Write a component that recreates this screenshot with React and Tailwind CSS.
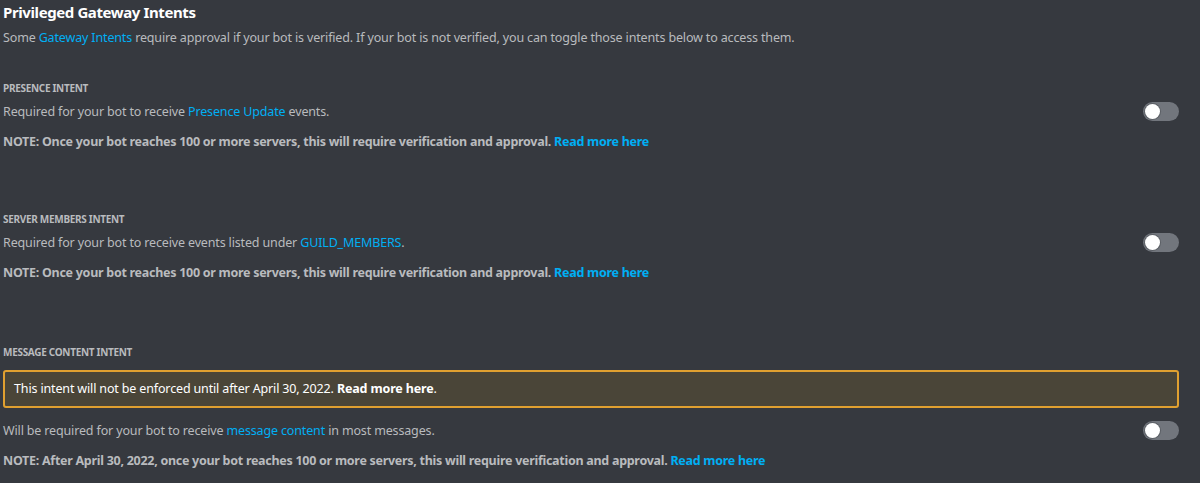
import React from "react";

const font = { fontFamily: '"Noto Sans", "Open Sans", sans-serif' };

function Toggle() {
  return (
    <div className="relative h-[19px] w-[36px] shrink-0 rounded-full bg-[#72767d]">
      <div className="absolute left-[2px] top-[2px] h-[15px] w-[15px] rounded-full bg-white ring-1 ring-[#5c6066]" />
    </div>
  );
}

function Link({ children, bold }) {
  return <span className={`text-[#00aff4] ${bold ? "font-bold" : ""}`}>{children}</span>;
}

function Section({ label, body, note, notice, bodyMt = "mt-[7px]", className = "" }) {
  return (
    <div className={className}>
      <div className="text-[10px] font-bold uppercase leading-[14px] tracking-[-0.3px] text-[#b9bbbe]">{label}</div>
      {notice}
      <div className={`${bodyMt} flex items-center justify-between pr-[21px]`}>
        <div className="text-[12.5px] leading-[18px] tracking-[-0.15px] text-[#b9bbbe]">{body}</div>
        <Toggle />
      </div>
      <div className="mt-[12px] text-[12.5px] font-bold leading-[18px] tracking-[-0.28px] text-[#b9bbbe]">{note}</div>
    </div>
  );
}

export default function App() {
  return (
    <div className="h-[483px] w-[1200px] overflow-hidden bg-[#36393f] pl-[3px] pt-[1px]" style={font}>
      <h2 className="text-[15px] font-bold leading-[22px] tracking-[-0.4px] text-white">Privileged Gateway Intents</h2>
      <p className="mt-[6px] text-[12.5px] leading-[18px] tracking-[-0.15px] text-[#b9bbbe]">
        Some <Link>Gateway Intents</Link> require approval if your bot is verified. If your bot is not verified, you can toggle those intents below to access them.
      </p>

      <Section
        className="mt-[34px]"
        label="Presence Intent"
        body={<>Required for your bot to receive <Link>Presence Update</Link> events.</>}
        note={<>NOTE: Once your bot reaches 100 or more servers, this will require verification and approval. <Link bold>Read more here</Link></>}
      />

      <Section
        className="mt-[61px]"
        label="Server Members Intent"
        body={<>Required for your bot to receive events listed under <Link>GUILD_MEMBERS</Link>.</>}
        note={<>NOTE: Once your bot reaches 100 or more servers, this will require verification and approval. <Link bold>Read more here</Link></>}
      />

      <Section
        className="mt-[63px]"
        label="Message Content Intent"
        bodyMt="mt-[13px]"
        notice={
          <div className="mr-[21px] mt-[11px] rounded-[3px] border-2 border-[#e0a030] bg-[#4a4538] px-[9px] py-[8px] text-[12.5px] leading-[18px] tracking-[-0.15px] text-white">
            This intent will not be enforced until after April 30, 2022. <span className="font-bold">Read more here</span>.
          </div>
        }
        body={<>Will be required for your bot to receive <Link>message content</Link> in most messages.</>}
        note={<>NOTE: After April 30, 2022, once your bot reaches 100 or more servers, this will require verification and approval. <Link bold>Read more here</Link></>}
      />
    </div>
  );
}
